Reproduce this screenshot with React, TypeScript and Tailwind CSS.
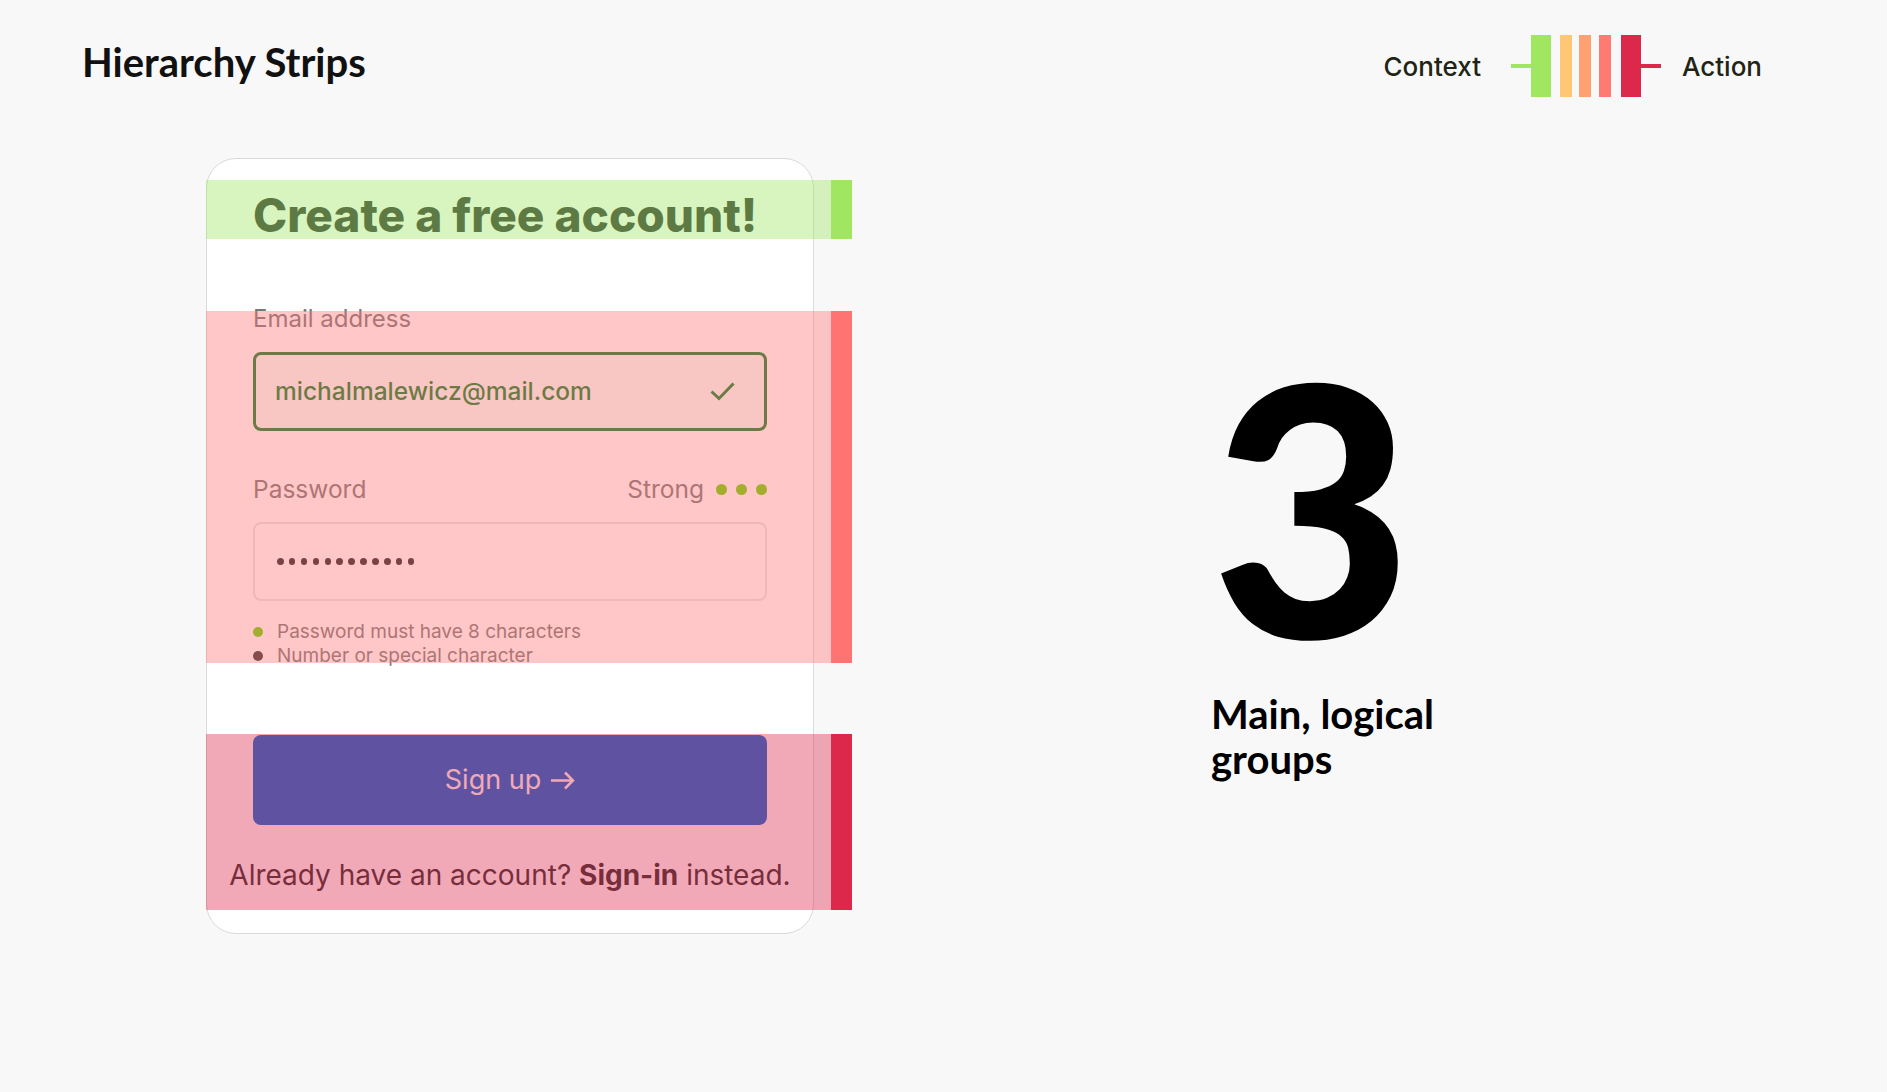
const strips = [
  { top: 'top-[22px]', height: 'h-[59px]', tint: 'bg-[#a0e660]/40', bar: 'bg-[#a0e660]' },
  { top: 'top-[153px]', height: 'h-[352px]', tint: 'bg-[#ff7373]/40', bar: 'bg-[#ff7373]' },
  { top: 'top-[576px]', height: 'h-[176px]', tint: 'bg-[#dc284a]/40', bar: 'bg-[#dc284a]' }
];

function Legend() {
  return (
    <div className="flex h-[62px] items-center font-['Inter',sans-serif] text-[26px] font-medium text-[#1f2414]">
      <span className="mt-[2px] leading-none">Context</span>
      <div className="ml-[30px] h-[4px] w-[20px] bg-[#a0e660]" />
      <div className="h-[62px] w-[20px] bg-[#a0e660]" />
      <div className="ml-[9px] h-[62px] w-[12px] bg-[#ffc673]" />
      <div className="ml-[7px] h-[62px] w-[12px] bg-[#ffa070]" />
      <div className="ml-[8px] h-[62px] w-[12px] bg-[#ff7b72]" />
      <div className="ml-[10px] h-[62px] w-[20px] bg-[#dc284a]" />
      <div className="h-[4px] w-[20px] bg-[#dc284a]" />
      <span className="ml-[21px] mt-[2px] leading-none">Action</span>
    </div>
  );
}

function SignupCard() {
  return (
    <div className="relative w-[646px] shrink-0">
      <div className="flex w-[608px] flex-col rounded-[30px] border-[1.5px] border-[#dadada] bg-white px-[46px] pb-[41px] pt-[28px] font-['Inter',sans-serif]">
        <h2 className="whitespace-nowrap text-[46px] font-extrabold leading-[56px] text-[#333]">
          Create a free account!
        </h2>

        <label className="mt-[62px] text-[24px] leading-[28px] text-[#777]">Email address</label>
        <div className="mt-[19px] flex h-[79px] items-center justify-between rounded-[8px] border-[3px] border-[#0a7f28] bg-[#f3fff8] pl-[19px] pr-[29px]">
          <span className="text-[24.5px] font-medium text-[#0a7f28]">michalmalewicz@mail.com</span>
          <svg width="25" height="19" viewBox="0 0 25 19" fill="none">
            <path d="M1.5 9.5 L9 16.5 L23.5 1.5" stroke="#0a7f28" strokeWidth="3" />
          </svg>
        </div>

        <div className="mt-[44px] flex h-[28px] items-center justify-between text-[24.5px] leading-[28px] text-[#777]">
          <span>Password</span>
          <div className="flex items-center">
            <span>Strong</span>
            <div className="ml-[12px] flex gap-[9px]">
              <span className="h-[11px] w-[11px] rounded-full bg-[#66d400]" />
              <span className="h-[11px] w-[11px] rounded-full bg-[#66d400]" />
              <span className="h-[11px] w-[11px] rounded-full bg-[#66d400]" />
            </div>
          </div>
        </div>
        <div className="mt-[19px] flex h-[79px] items-center gap-[5.4px] rounded-[8px] border-2 border-[#e4e4e4] bg-white pl-[22px]">
          {Array.from({ length: 12 }).map((_, i) => (
            <span key={i} className="h-[6.5px] w-[6.5px] rounded-full bg-[#222]" />
          ))}
        </div>

        <ul className="mt-[19px] text-[19px] leading-[24px] text-[#777]">
          <li className="flex items-center gap-[14px]">
            <span className="h-[10px] w-[10px] rounded-full bg-[#66d400]" />
            Password must have 8 characters
          </li>
          <li className="flex items-center gap-[14px]">
            <span className="h-[10px] w-[10px] rounded-full bg-[#333]" />
            Number or special character
          </li>
        </ul>

        <button className="mt-[67px] flex h-[90px] items-center justify-center gap-[9px] rounded-[8px] bg-[#0c6ed9] text-[27px] text-white">
          Sign up
          <svg width="25" height="19" viewBox="0 0 25 19" fill="none">
            <path d="M1 9.5 H23 M15 1.5 L23 9.5 L15 17.5" stroke="white" strokeWidth="2.5" />
          </svg>
        </button>

        <p className="-mx-[40px] mt-[33px] whitespace-nowrap text-center text-[28px] leading-[34px] text-[#333]">
          Already have an account? <span className="font-bold">Sign-in</span> instead.
        </p>
      </div>

      {strips.map((strip) => (
        <div key={strip.top} className={`pointer-events-none absolute left-0 flex ${strip.top} ${strip.height}`}>
          <div className={`w-[625px] ${strip.tint}`} />
          <div className={`w-[21px] ${strip.bar}`} />
        </div>
      ))}
    </div>
  );
}

export default function App() {
  return (
    <div className="min-h-screen bg-[#f8f8f8]">
      <header className="flex items-start justify-between pl-[82px] pr-[125px] pt-[35px]">
        <h1 className="mt-[7px] font-['Lato',sans-serif] text-[40px] font-bold leading-none text-[#111]">
          Hierarchy Strips
        </h1>
        <Legend />
      </header>

      <main className="mt-[61px] flex items-start pl-[206px]">
        <SignupCard />
        <div className="ml-[359px] mt-[172px] flex flex-col font-['Lato',sans-serif] text-black">
          <span className="text-[348px] font-black leading-none">3</span>
          <p className="mt-[14px] text-[40px] font-bold leading-[45px]">
            Main, logical
            <br />
            groups
          </p>
        </div>
      </main>
    </div>
  );
}
